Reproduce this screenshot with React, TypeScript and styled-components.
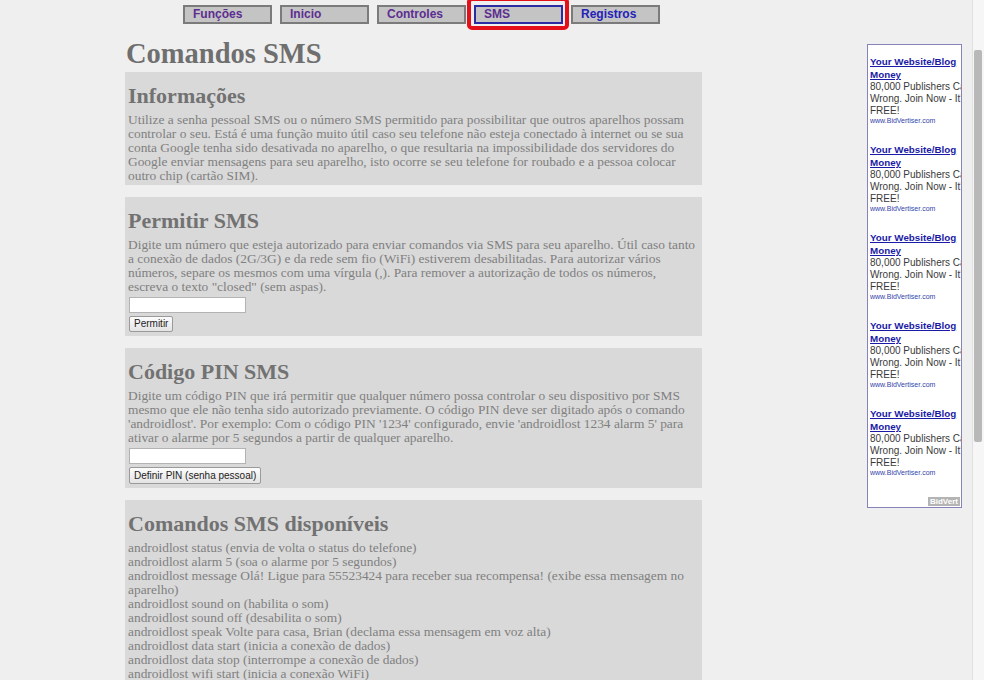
import React from "react";
import styled, { createGlobalStyle } from "styled-components";

const GlobalStyle = createGlobalStyle`
  html, body {
    margin: 0;
    padding: 0;
    background: #efefef;
  }
  body {
    font-family: "Liberation Serif", "Times New Roman", serif;
  }
`;

const Page = styled.div`
  display: flex;
  width: 984px;
  height: 680px;
  overflow: hidden;
  background: #efefef;
`;

const Main = styled.div`
  width: 867px;
  flex-shrink: 0;
`;

const Nav = styled.nav`
  display: flex;
  gap: 8px;
  height: 19px;
  padding: 5px 0 0 183px;
`;

const NavButton = styled.a<{ $active?: boolean; $fresh?: boolean }>`
  position: relative;
  box-sizing: border-box;
  width: 89px;
  height: 19px;
  padding-left: 8px;
  border: 2px solid ${(p) => (p.$active ? "#2b2ba3" : "#7b7b7b")};
  background: #c4c4c4;
  font: bold 12px/15px "Liberation Sans", Arial, sans-serif;
  color: ${(p) => (p.$fresh ? "#2323b8" : "#5c2e91")};
  text-decoration: none;
  cursor: pointer;
`;

const Highlight = styled.span`
  position: absolute;
  left: -9px;
  right: -8px;
  top: -10px;
  bottom: -8px;
  border: 4px solid #e3101a;
  border-radius: 5px;
  pointer-events: none;
`;

const PageTitle = styled.h1`
  margin: 15px 0 3px 126px;
  font-size: 28.5px;
  line-height: 30px;
  font-weight: bold;
  color: #6f6f6f;
`;

const Content = styled.div`
  display: flex;
  flex-direction: column;
  gap: 12px;
  width: 577px;
  margin-left: 125px;
`;

const Panel = styled.section<{ $form?: boolean }>`
  background: #d9d9d9;
  padding: 12px 0 ${(p) => (p.$form ? "4px" : "2px")} 3px;
`;

const PanelTitle = styled.h2`
  margin: 0 0 5px;
  font-size: 22px;
  line-height: 24px;
  font-weight: bold;
  color: #727272;
`;

const Text = styled.p`
  margin: 0;
  font-size: 13.4px;
  line-height: 14px;
  color: #808080;
`;

const Field = styled.input`
  display: block;
  box-sizing: border-box;
  width: 117px;
  height: 16px;
  margin: 3px 0 0 1px;
  border: 1px solid #b3b3b3;
  background: #fff;
`;

const Button = styled.button<{ $tall?: boolean }>`
  display: block;
  height: ${(p) => (p.$tall ? "17px" : "16px")};
  margin: 3px 0 0 1px;
  padding: 0 4px;
  border: 1px solid #9a9a9a;
  border-radius: 2px;
  background: linear-gradient(#fcfcfc, #e4e4e4);
  font: 10px/14px "Liberation Sans", Arial, sans-serif;
  color: #222;
`;

const AdColumn = styled.aside`
  position: relative;
  box-sizing: border-box;
  width: 95px;
  height: 464px;
  margin-top: 44px;
  padding: 10px 0 0 2px;
  border: 1px solid #8484b8;
  background: #fff;
  overflow: hidden;
  font-family: "Liberation Sans", Arial, sans-serif;
`;

const Ad = styled.div`
  width: 140px;
  margin-bottom: 18px;
  white-space: nowrap;
`;

const AdTitle = styled.a`
  display: block;
  font-size: 9.8px;
  line-height: 13px;
  font-weight: bold;
  color: #1a1aa6;
  text-decoration: underline;
`;

const AdText = styled.div`
  font-size: 10px;
  line-height: 12px;
  color: #3a3a3a;
`;

const AdUrl = styled.div`
  font-size: 7px;
  line-height: 8px;
  color: #3344aa;
`;

const Badge = styled.span`
  position: absolute;
  right: 1px;
  bottom: 1px;
  padding: 0 2px;
  background: #b4b4b4;
  color: #fff;
  font: bold 8px/9px "Liberation Sans", Arial, sans-serif;
`;

const ScrollStrip = styled.div`
  box-sizing: border-box;
  width: 12px;
  margin-left: 10px;
  padding: 50px 0 0 1px;
  background: #f6f6f6;
  border-left: 1px solid #e0e0e0;
`;

const Thumb = styled.div`
  width: 8px;
  height: 392px;
  border-radius: 2px;
  background: #b8b8b8;
`;

const navItems = [
  { label: "Funções" },
  { label: "Inicio" },
  { label: "Controles" },
  { label: "SMS", active: true },
  { label: "Registros", fresh: true },
];

const commands = [
  "androidlost status (envia de volta o status do telefone)",
  "androidlost alarm 5 (soa o alarme por 5 segundos)",
  "androidlost message Olá! Ligue para 55523424 para receber sua recompensa! (exibe essa mensagem no aparelho)",
  "androidlost sound on (habilita o som)",
  "androidlost sound off (desabilita o som)",
  "androidlost speak Volte para casa, Brian (declama essa mensagem em voz alta)",
  "androidlost data start (inicia a conexão de dados)",
  "androidlost data stop (interrompe a conexão de dados)",
  "androidlost wifi start (inicia a conexão WiFi)",
  "androidlost wifi stop (interrompe a conexão WiFi)",
];

export default function App() {
  return (
    <>
      <GlobalStyle />
      <Page>
        <Main>
          <Nav>
            {navItems.map((item) => (
              <NavButton key={item.label} $active={item.active} $fresh={item.fresh}>
                {item.label}
                {item.active && <Highlight />}
              </NavButton>
            ))}
          </Nav>
          <PageTitle>Comandos SMS</PageTitle>
          <Content>
            <Panel>
              <PanelTitle>Informações</PanelTitle>
              <Text>
                Utilize a senha pessoal SMS ou o número SMS permitido para possibilitar que outros aparelhos possam
                controlar o seu. Está é uma função muito útil caso seu telefone não esteja conectado à internet ou se sua
                conta Google tenha sido desativada no aparelho, o que resultaria na impossibilidade dos servidores do
                Google enviar mensagens para seu aparelho, isto ocorre se seu telefone for roubado e a pessoa colocar
                outro chip (cartão SIM).
              </Text>
            </Panel>
            <Panel $form>
              <PanelTitle>Permitir SMS</PanelTitle>
              <Text>
                Digite um número que esteja autorizado para enviar comandos via SMS para seu aparelho. Útil caso tanto
                a conexão de dados (2G/3G) e da rede sem fio (WiFi) estiverem desabilitadas. Para autorizar vários
                números, separe os mesmos com uma vírgula (,). Para remover a autorização de todos os números,
                <br />
                escreva o texto "closed" (sem aspas).
              </Text>
              <Field type="text" />
              <Button>Permitir</Button>
            </Panel>
            <Panel $form>
              <PanelTitle>Código PIN SMS</PanelTitle>
              <Text>
                Digite um código PIN que irá permitir que qualquer número possa controlar o seu dispositivo por SMS
                mesmo que ele não tenha sido autorizado previamente. O código PIN deve ser digitado após o comando
                'androidlost'. Por exemplo: Com o código PIN '1234' configurado, envie 'androidlost 1234 alarm 5' para
                ativar o alarme por 5 segundos a partir de qualquer aparelho.
              </Text>
              <Field type="text" />
              <Button $tall>Definir PIN (senha pessoal)</Button>
            </Panel>
            <Panel>
              <PanelTitle>Comandos SMS disponíveis</PanelTitle>
              {commands.map((c) => (
                <Text key={c}>{c}</Text>
              ))}
            </Panel>
          </Content>
        </Main>
        <AdColumn>
          {[0, 1, 2, 3, 4].map((i) => (
            <Ad key={i}>
              <AdTitle>Your Website/Blog</AdTitle>
              <AdTitle>Money</AdTitle>
              <AdText>80,000 Publishers Can't Be</AdText>
              <AdText>Wrong. Join Now - It's</AdText>
              <AdText>FREE!</AdText>
              <AdUrl>www.BidVertiser.com</AdUrl>
            </Ad>
          ))}
          <Badge>BidVert</Badge>
        </AdColumn>
        <ScrollStrip>
          <Thumb />
        </ScrollStrip>
      </Page>
    </>
  );
}
